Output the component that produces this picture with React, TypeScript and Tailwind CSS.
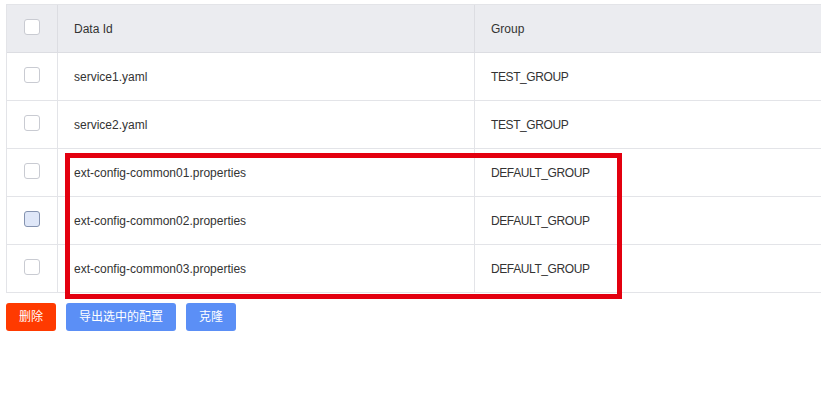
import React from 'react';

type Row = { id: string; group: string; hover?: boolean };

const rows: Row[] = [
  { id: 'service1.yaml', group: 'TEST_GROUP' },
  { id: 'service2.yaml', group: 'TEST_GROUP' },
  { id: 'ext-config-common01.properties', group: 'DEFAULT_GROUP' },
  { id: 'ext-config-common02.properties', group: 'DEFAULT_GROUP', hover: true },
  { id: 'ext-config-common03.properties', group: 'DEFAULT_GROUP' },
];

const Checkbox = ({ hover }: { hover?: boolean }) => (
  <span
    className={
      'block w-[16px] h-[16px] -mt-[3px] rounded-[3px] border ' +
      (hover ? 'bg-[#dfe7f8] border-[#8593b0]' : 'bg-white border-[#c9cbd2]')
    }
  />
);

export default function App() {
  return (
    <div
      className="relative w-[821px] h-[414px] overflow-hidden bg-white pt-[4px] pl-[6px] text-[12px] text-[#333]"
      style={{ fontFamily: '"Liberation Sans", Arial, "Noto Sans CJK SC", sans-serif' }}
    >
      <div className="w-[860px] border-l border-t border-[#e3e4e8]">
        <div className="flex h-[48px] bg-[#ebecf0] border-b border-[#dcdde2]">
          <div className="w-[51px] flex items-center justify-center border-r border-[#dcdde2]">
            <Checkbox />
          </div>
          <div className="w-[417px] flex items-center pl-[16px] border-r border-[#dcdde2]">Data Id</div>
          <div className="flex-1 flex items-center pl-[16px]">Group</div>
        </div>
        {rows.map((r) => (
          <div key={r.id} className="flex h-[48px] border-b border-[#e3e4e8]">
            <div className="w-[51px] flex items-center justify-center border-r border-[#e3e4e8]">
              <Checkbox hover={r.hover} />
            </div>
            <div className="w-[417px] flex items-center pl-[16px] border-r border-[#e3e4e8]">{r.id}</div>
            <div className="flex-1 flex items-center pl-[16px] tracking-[-0.4px]">{r.group}</div>
          </div>
        ))}
      </div>

      <div className="flex gap-[10px] mt-[10px]">
        <button className="w-[50px] h-[28px] rounded-[3px] bg-[#ff3a00] text-white text-[12px]">删除</button>
        <button className="w-[110px] h-[28px] rounded-[3px] bg-[#5b8ff6] text-white text-[12px]">导出选中的配置</button>
        <button className="w-[50px] h-[28px] rounded-[3px] bg-[#5b8ff6] text-white text-[12px]">克隆</button>
      </div>

      <div className="absolute left-[65px] top-[153px] w-[557px] h-[146px] border-[5px] border-[#e3000f] pointer-events-none" />
    </div>
  );
}
